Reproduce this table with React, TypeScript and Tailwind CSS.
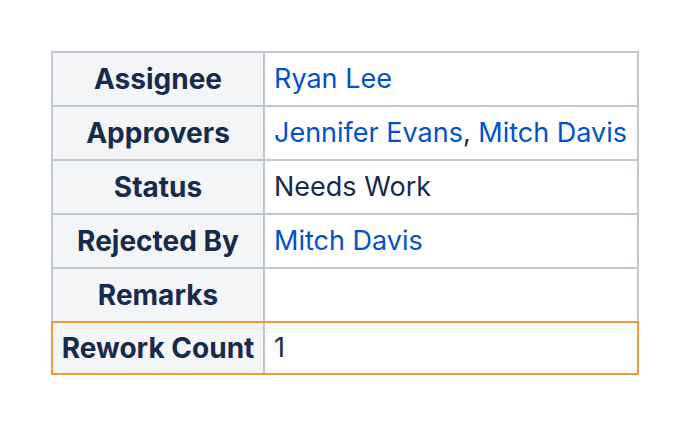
import React from "react";

type Row = { label: string; value: React.ReactNode };

const Link = ({ children }: { children: React.ReactNode }) => (
  <span className="text-[#0052cc]">{children}</span>
);

const rows: Row[] = [
  { label: "Assignee", value: <Link>Ryan Lee</Link> },
  {
    label: "Approvers",
    value: (
      <>
        <Link>Jennifer Evans</Link>, <Link>Mitch Davis</Link>
      </>
    ),
  },
  { label: "Status", value: "Needs Work" },
  { label: "Rejected By", value: <Link>Mitch Davis</Link> },
  { label: "Remarks", value: "" },
];

export default function App() {
  return (
    <div className="min-h-[426px] w-[689px] bg-white pt-[51px] pl-[51px] text-[27px] text-[#172b4d] [font-family:Inter,'Noto_Sans',sans-serif]">
      <div className="w-[588px]">
        {rows.map((r) => (
          <div key={r.label} className="flex h-[54px] border-x-2 border-t-2 border-[#c1c7d0]">
            <div className="flex w-[212px] items-center justify-center border-r-2 border-[#c1c7d0] bg-[#f4f5f7] text-[28px] font-bold">
              {r.label}
            </div>
            <div className="flex flex-1 items-center pl-[9px]">
              <span>{r.value}</span>
            </div>
          </div>
        ))}
        <div className="flex h-[54px] border-2 border-[#f0993c]">
          <div className="flex w-[212px] items-center justify-center border-r-2 border-[#c1c7d0] bg-[#f4f5f7] text-[28px] font-bold">
            Rework Count
          </div>
          <div className="flex flex-1 items-center pl-[9px]">1</div>
        </div>
      </div>
    </div>
  );
}
